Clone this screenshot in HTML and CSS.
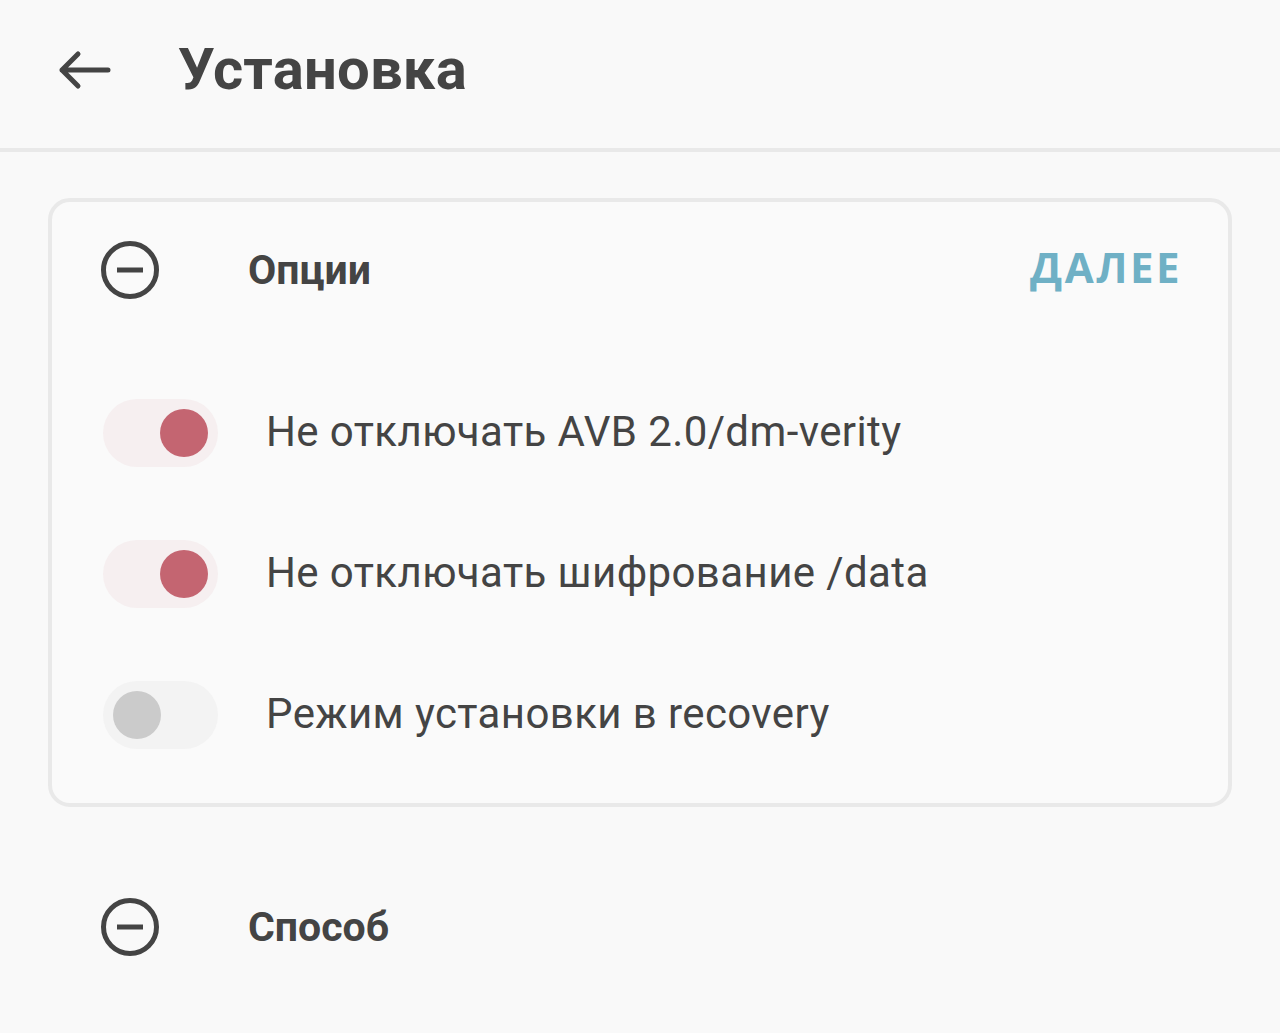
FILE: index.html
```html
<!DOCTYPE html>
<html lang="ru">
<head>
<meta charset="utf-8">
<link rel="stylesheet" href="styles.css">
</head>
<body>
<header class="appbar">
  <svg class="back" width="56" height="40" viewBox="0 0 56 40">
    <path d="M52 20H6M22 4L6 20L22 36" fill="none" stroke="#444" stroke-width="5" stroke-linecap="round" stroke-linejoin="round"/>
  </svg>
  <h1 class="title">Установка</h1>
</header>
<main class="content">
  <section class="card">
    <div class="section-head">
      <svg class="minus" width="60" height="60" viewBox="0 0 60 60">
        <circle cx="30" cy="30" r="26.5" fill="none" stroke="#444" stroke-width="5"/>
        <path d="M17 30H43" stroke="#444" stroke-width="5"/>
      </svg>
      <span class="section-title">Опции</span>
      <span class="next">ДАЛЕЕ</span>
    </div>
    <div class="options">
      <div class="opt">
        <span class="switch on"><span class="thumb"></span></span>
        <span class="opt-label">Не отключать AVB 2.0/dm-verity</span>
      </div>
      <div class="opt">
        <span class="switch on"><span class="thumb"></span></span>
        <span class="opt-label">Не отключать шифрование /data</span>
      </div>
      <div class="opt">
        <span class="switch"><span class="thumb"></span></span>
        <span class="opt-label">Режим установки в recovery</span>
      </div>
    </div>
  </section>
  <section class="plain">
    <div class="section-head">
      <svg class="minus" width="60" height="60" viewBox="0 0 60 60">
        <circle cx="30" cy="30" r="26.5" fill="none" stroke="#444" stroke-width="5"/>
        <path d="M17 30H43" stroke="#444" stroke-width="5"/>
      </svg>
      <span class="section-title">Способ</span>
    </div>
  </section>
</main>
</body>
</html>
```
FILE: styles.css
```css
html, body {
  margin: 0;
  padding: 0;
  background: #f9f9f9;
  color: #424242;
  font-family: Roboto, "Noto Sans", sans-serif;
}
.appbar {
  height: 148px;
  border-bottom: 4px solid #e9e9e9;
  display: flex;
  align-items: center;
  padding-left: 56px;
  box-sizing: content-box;
}
.back {
  display: block;
  margin-top: -8px;
}
.title {
  margin: 0 0 0 66px;
  font-size: 58px;
  font-weight: 700;
  color: #444;
  letter-spacing: 0.2px;
  line-height: 1;
  padding-bottom: 10px;
}
.content {
  padding: 46px 48px 0;
}
.card {
  border: 4px solid #e9e9e9;
  border-radius: 22px;
  background: #fafafa;
  padding: 0 48px 18px 48px;
}
.section-head {
  display: flex;
  align-items: center;
  height: 136px;
}
.minus {
  display: block;
  flex: none;
  margin-top: -1px;
}
.section-title {
  margin-left: 88px;
  font-size: 41px;
  font-weight: 700;
  color: #444;
}
.next {
  margin-left: auto;
  font-family: "Open Sans", sans-serif;
  font-size: 42px;
  font-weight: 700;
  color: #6fb0c5;
  letter-spacing: 2.5px;
  margin-right: -2px;
  padding-bottom: 8px;
}
.options {
  padding-top: 24px;
}
.opt {
  display: flex;
  align-items: center;
  height: 141px;
}
.switch {
  flex: none;
  position: relative;
  width: 115px;
  height: 68px;
  border-radius: 34px;
  background: #f3f3f3;
  margin-left: 3px;
}
.switch.on {
  background: #f6eff0;
}
.thumb {
  position: absolute;
  top: 10px;
  left: 10px;
  width: 48px;
  height: 48px;
  border-radius: 50%;
  background: #cbcbcb;
}
.switch.on .thumb {
  left: 57px;
  background: #c46571;
}
.opt-label {
  margin-left: 48px;
  font-size: 42px;
  letter-spacing: 0.4px;
  color: #444;
  padding-bottom: 2px;
}
.plain {
  padding: 50px 52px 0;
}
.plain .section-head {
  height: 140px;
}
```
